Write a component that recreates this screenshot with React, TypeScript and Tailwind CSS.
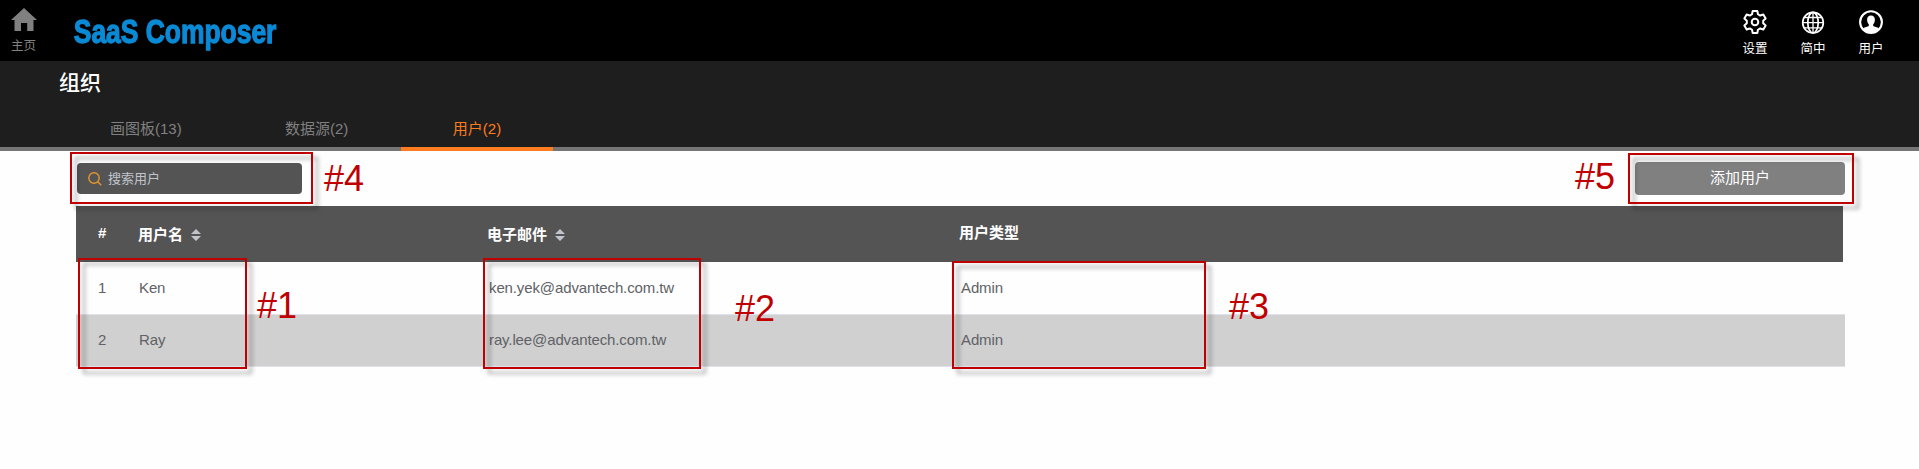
import type { ReactNode } from "react";

const users = [
  { id: 1, name: "Ken", email: "ken.yek@advantech.com.tw", type: "Admin" },
  { id: 2, name: "Ray", email: "ray.lee@advantech.com.tw", type: "Admin" },
];

function HomeIcon() {
  return (
    <svg width="26" height="23" viewBox="0 0 26 23" fill="#808080">
      <path d="M13 0 L26 12 H22.5 V23 H16.2 V15 H10 V23 H3.5 V12 H0 Z" />
    </svg>
  );
}

const gearPoints = Array.from({ length: 6 }, (_, i) =>
  [
    [-21, 8.3],
    [-12, 11.2],
    [12, 11.2],
    [21, 8.3],
  ].map(([offset, r]) => {
    const a = ((i * 60 - 90 + offset) * Math.PI) / 180;
    return `${(13 + r * Math.cos(a)).toFixed(2)},${(13 + r * Math.sin(a)).toFixed(2)}`;
  }),
)
  .flat()
  .join(" ");

function GearIcon() {
  return (
    <svg width="26" height="26" viewBox="0 0 26 26" fill="none" stroke="#fff" strokeWidth="2" strokeLinejoin="round">
      <polygon points={gearPoints} />
      <circle cx="13" cy="13" r="3.3" />
    </svg>
  );
}

function GlobeIcon() {
  return (
    <svg width="26" height="26" viewBox="0 0 26 26" fill="none" stroke="#fff" strokeWidth="1.7">
      <circle cx="13" cy="13.7" r="10.3" />
      <ellipse cx="13" cy="13.7" rx="5.2" ry="10.3" />
      <path d="M13 3.4v20.6M2.7 13.7h20.6M4.3 8.5h17.4M4.3 18.9h17.4" strokeWidth="1.3" />
    </svg>
  );
}

function UserIcon() {
  return (
    <svg width="26" height="26" viewBox="0 0 26 26">
      <circle cx="13" cy="13.1" r="10.9" fill="none" stroke="#fff" strokeWidth="2.1" />
      <path
        fill="#fff"
        d="M13 6.5c-2.6 0-3.9 1.7-3.9 4.2 0 1.9.7 3.5 1.7 4.5v1.700c-1.100.9-4 .9-5.800 2.600 1.900 2.600 4.900 4.300 8 4.300s6.100-1.700 8-4.300c-1.800-1.700-4.700-1.700-5.800-2.600v-1.700c1-1 1.700-2.600 1.700-4.500 0-2.500-1.300-4.200-3.900-4.200z"
      />
    </svg>
  );
}

function SortIcon() {
  return (
    <svg width="10" height="12" viewBox="0 0 10 12" fill="#c0c4cc">
      <path d="M5 0l5 5H0zM5 12L0 7h10z" />
    </svg>
  );
}

function Logo() {
  return (
    <div className="ml-[26px] w-[210px] pt-[11px]">
      <span className="block w-[270px] origin-left scale-x-[0.777] whitespace-nowrap pl-px text-[34px] font-bold leading-[40px] text-[#0a8ad6] [-webkit-text-stroke:1.3px_#0a8ad6]">
        SaaS Composer
      </span>
    </div>
  );
}

function NavItem({ icon, label }: { icon: ReactNode; label: string }) {
  return (
    <div className="flex w-[26px] flex-col items-center">
      {icon}
      <span className="mt-[6px] whitespace-nowrap text-[12.5px] leading-[16px] text-white">{label}</span>
    </div>
  );
}

function Tab({ label, active = false }: { label: string; active?: boolean }) {
  return (
    <div
      className={
        active
          ? "flex w-[152px] justify-center border-b-4 border-[#ff7b1f] text-[#ff7b1f]"
          : "flex justify-center text-[#808080]"
      }
    >
      {label}
    </div>
  );
}

function Callout({ box, tag, label }: { box: string; tag: string; label: string }) {
  return (
    <>
      <div className={`absolute border-2 border-[#c00000] drop-shadow-[5px_5px_2px_rgba(0,0,0,0.35)] ${box}`} />
      <span className={`absolute text-[36px] leading-[36px] text-[#c00000] ${tag}`}>{label}</span>
    </>
  );
}

export default function App() {
  return (
    <div className="relative h-[469px] w-[1919px] overflow-hidden bg-[#fefefe] font-['Liberation_Sans','Noto_Sans_CJK_SC',sans-serif] text-[15px]">
      <header className="flex h-[61px] items-start bg-black">
        <div className="flex w-[47px] flex-col items-center pt-[8px]">
          <HomeIcon />
          <span className="mt-[6px] text-[12.5px] leading-[18px] text-[#808080]">主页</span>
        </div>
        <Logo />
        <nav className="ml-auto mr-[35px] flex gap-[32px] pt-[9px]">
          <NavItem icon={<GearIcon />} label="设置" />
          <NavItem icon={<GlobeIcon />} label="简中" />
          <NavItem icon={<UserIcon />} label="用户" />
        </nav>
      </header>

      <section className="flex h-[90px] flex-col bg-[#1e1e1e]">
        <h1 className="ml-[59px] mt-[9px] text-[21px] font-medium leading-[26px] text-white">组织</h1>
        <div className="mt-auto flex h-[39px] border-b-4 border-[#757575] leading-[34px]">
          <div className="ml-[110px] flex w-[175px]">
            <Tab label="画图板(13)" />
          </div>
          <div className="flex w-[116px]">
            <Tab label="数据源(2)" />
          </div>
          <div className="flex h-[39px]">
            <Tab label="用户(2)" active />
          </div>
        </div>
      </section>

      <main className="pl-[76px]">
        <div className="flex h-[55px] w-[1769px] items-start justify-between pl-px pt-[11px]">
          <div className="mt-px flex h-[31px] w-[225px] items-center rounded-[4px] bg-[#545454] pl-[11px] text-[13px] text-[#c0c4cc]">
            <svg width="14" height="14" viewBox="0 0 14 14" fill="none" stroke="#e6962e" strokeWidth="1.4">
              <circle cx="6" cy="6" r="5.2" />
              <path d="M9.8 9.8L13.2 13.2" />
            </svg>
            <span className="ml-[6px]">搜索用户</span>
          </div>
          <button className="h-[33px] w-[210px] rounded-[4px] bg-[#808080] text-[15px] text-white">
            添加用户
          </button>
        </div>

        <div className="grid h-[56px] w-[1767px] grid-cols-[62px_349px_472px_1fr] bg-[#545454] font-bold text-white">
          <span className="pl-[22px] pt-[16px] leading-[22px]">#</span>
          <span className="mt-[18px] flex h-[22px] items-center gap-[8px]">用户名<SortIcon /></span>
          <span className="mt-[18px] flex h-[22px] items-center gap-[8px]">电子邮件<SortIcon /></span>
          <span className="mt-[16px] leading-[22px]">用户类型</span>
        </div>
        <div>
          {users.map((u) => (
            <div
              key={u.id}
              className="grid h-[52px] w-[1769px] grid-cols-[63px_350px_472px_1fr] border-b border-[#dfe2ea] leading-[51px] tracking-[-0.12px] text-[#606266] odd:h-[53px] odd:bg-[#fefefe] even:bg-[#d0d0d0] even:leading-[50px]"
            >
              <span className="pl-[22px]">{u.id}</span>
              <span>{u.name}</span>
              <span>{u.email}</span>
              <span>{u.type}</span>
            </div>
          ))}
        </div>
      </main>

      <Callout box="left-[70px] top-[152px] h-[52px] w-[243px]" tag="left-[324px] top-[161px]" label="#4" />
      <Callout box="left-[1628px] top-[153px] h-[51px] w-[226px]" tag="left-[1575px] top-[159px]" label="#5" />
      <Callout box="left-[78px] top-[258px] h-[111px] w-[169px]" tag="left-[257px] top-[288px]" label="#1" />
      <Callout box="left-[483px] top-[258px] h-[111px] w-[218px]" tag="left-[735px] top-[291px]" label="#2" />
      <Callout box="left-[952px] top-[261px] h-[108px] w-[254px]" tag="left-[1229px] top-[289px]" label="#3" />
    </div>
  );
}
